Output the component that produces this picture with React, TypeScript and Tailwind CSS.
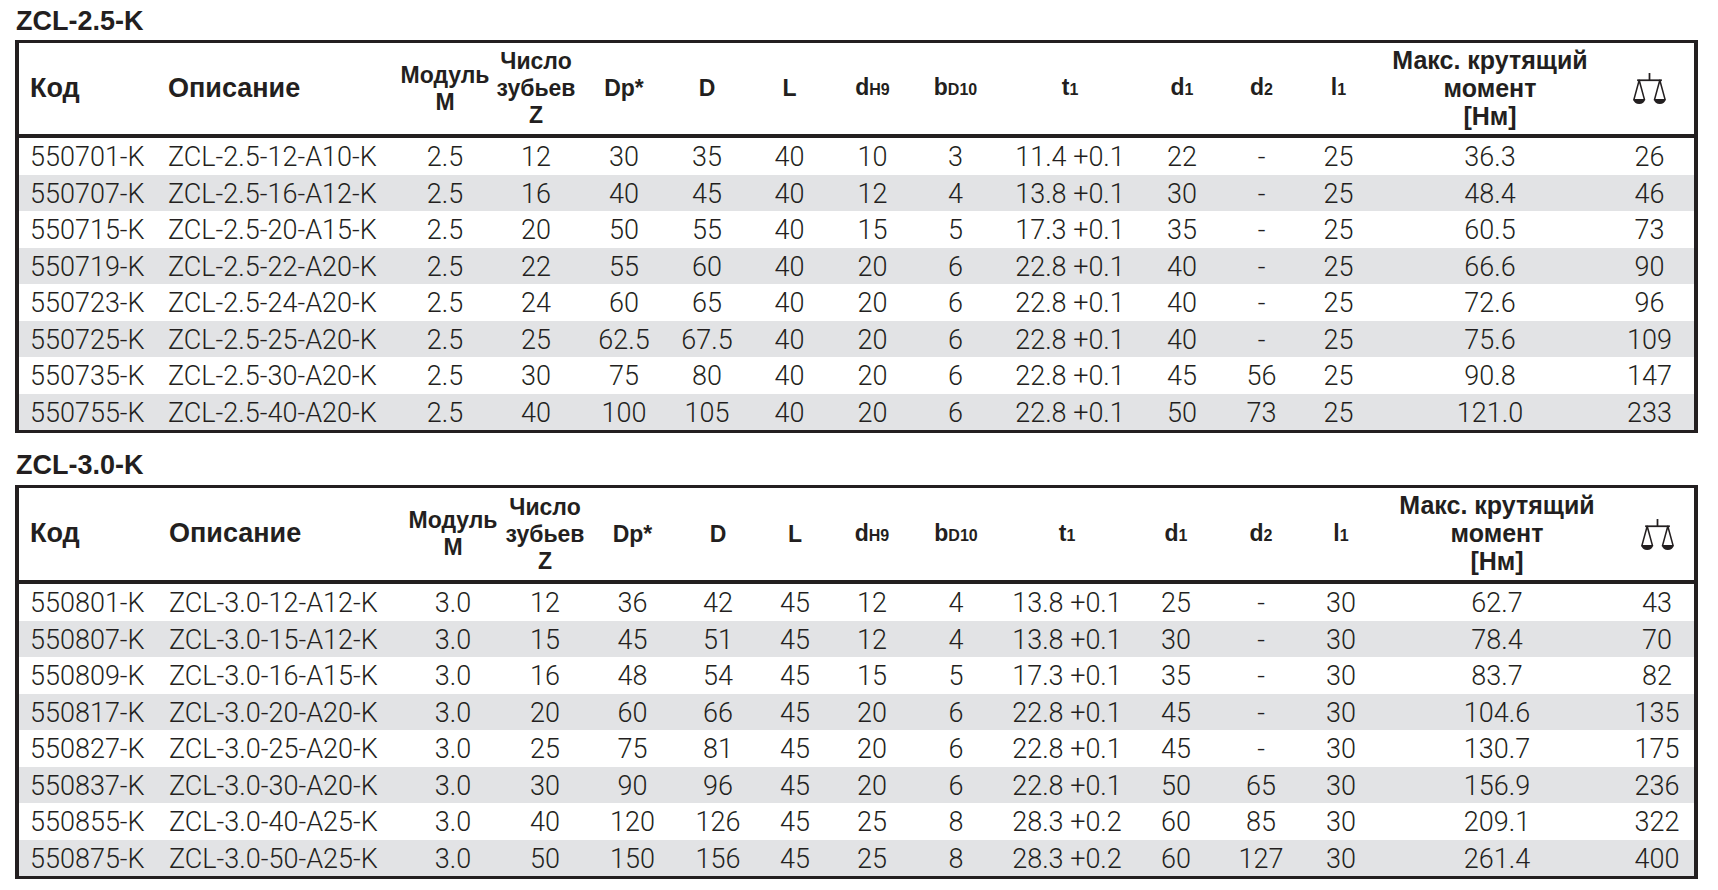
import React, { ReactNode } from "react";

type Row = string[];

type TableDef = {
  title: string;
  cols: string[]; // column widths, one class per column
  rows: Row[];
};

// balance scale icon used in the weight column
function ScaleIcon() {
  return (
    <svg width="33" height="31" viewBox="0 0 32 30" className="inline-block" fill="none">
      <line x1="16" y1="0" x2="16" y2="7" stroke="#231f20" strokeWidth="1.7" />
      <line x1="4" y1="7" x2="28" y2="7" stroke="#231f20" strokeWidth="1.7" />
      <path d="M6 7 L0.8 26 L11.2 26 Z" stroke="#231f20" strokeWidth="1.5" strokeLinejoin="round" />
      <path d="M26 7 L20.8 26 L31.2 26 Z" stroke="#231f20" strokeWidth="1.5" strokeLinejoin="round" />
      <path d="M0.5 26 A5.5 4 0 0 0 11.5 26 Z" fill="#231f20" />
      <path d="M20.5 26 A5.5 4 0 0 0 31.5 26 Z" fill="#231f20" />
    </svg>
  );
}

// bold letter with a smaller trailing part (dH9, bD10, t1 ...)
function Sub({ main, sub }: { main: string; sub: string }) {
  return (
    <span>
      {main}
      <span className="text-[16px]">{sub}</span>
    </span>
  );
}

const headers: ReactNode[] = [
  <span className="text-[27px]">Код</span>,
  <span className="text-[27px]">Описание</span>,
  <>
    Модуль
    <br />M
  </>,
  <>
    Число
    <br />
    зубьев
    <br />Z
  </>,
  "Dp*",
  "D",
  "L",
  <Sub main="d" sub="H9" />,
  <Sub main="b" sub="D10" />,
  <Sub main="t" sub="1" />,
  <Sub main="d" sub="1" />,
  <Sub main="d" sub="2" />,
  <Sub main="l" sub="1" />,
  <span className="text-[25px]">
    Макс. крутящий
    <br />
    момент
    <br />
    [Нм]
  </span>,
  <ScaleIcon />,
];

const tables: TableDef[] = [
  {
    title: "ZCL-2.5-K",
    cols: [
      "w-[136px]", "w-[245px]", "w-[90px]", "w-[92px]", "w-[84px]",
      "w-[82px]", "w-[83px]", "w-[83px]", "w-[83px]", "w-[146px]",
      "w-[78px]", "w-[81px]", "w-[73px]", "w-[230px]", "w-[89px]",
    ],
    rows: [
      ["550701-K", "ZCL-2.5-12-A10-K", "2.5", "12", "30", "35", "40", "10", "3", "11.4 +0.1", "22", "-", "25", "36.3", "26"],
      ["550707-K", "ZCL-2.5-16-A12-K", "2.5", "16", "40", "45", "40", "12", "4", "13.8 +0.1", "30", "-", "25", "48.4", "46"],
      ["550715-K", "ZCL-2.5-20-A15-K", "2.5", "20", "50", "55", "40", "15", "5", "17.3 +0.1", "35", "-", "25", "60.5", "73"],
      ["550719-K", "ZCL-2.5-22-A20-K", "2.5", "22", "55", "60", "40", "20", "6", "22.8 +0.1", "40", "-", "25", "66.6", "90"],
      ["550723-K", "ZCL-2.5-24-A20-K", "2.5", "24", "60", "65", "40", "20", "6", "22.8 +0.1", "40", "-", "25", "72.6", "96"],
      ["550725-K", "ZCL-2.5-25-A20-K", "2.5", "25", "62.5", "67.5", "40", "20", "6", "22.8 +0.1", "40", "-", "25", "75.6", "109"],
      ["550735-K", "ZCL-2.5-30-A20-K", "2.5", "30", "75", "80", "40", "20", "6", "22.8 +0.1", "45", "56", "25", "90.8", "147"],
      ["550755-K", "ZCL-2.5-40-A20-K", "2.5", "40", "100", "105", "40", "20", "6", "22.8 +0.1", "50", "73", "25", "121.0", "233"],
    ],
  },
  {
    title: "ZCL-3.0-K",
    cols: [
      "w-[137px]", "w-[251px]", "w-[92px]", "w-[92px]", "w-[83px]",
      "w-[88px]", "w-[66px]", "w-[88px]", "w-[80px]", "w-[142px]",
      "w-[76px]", "w-[94px]", "w-[66px]", "w-[246px]", "w-[74px]",
    ],
    rows: [
      ["550801-K", "ZCL-3.0-12-A12-K", "3.0", "12", "36", "42", "45", "12", "4", "13.8 +0.1", "25", "-", "30", "62.7", "43"],
      ["550807-K", "ZCL-3.0-15-A12-K", "3.0", "15", "45", "51", "45", "12", "4", "13.8 +0.1", "30", "-", "30", "78.4", "70"],
      ["550809-K", "ZCL-3.0-16-A15-K", "3.0", "16", "48", "54", "45", "15", "5", "17.3 +0.1", "35", "-", "30", "83.7", "82"],
      ["550817-K", "ZCL-3.0-20-A20-K", "3.0", "20", "60", "66", "45", "20", "6", "22.8 +0.1", "45", "-", "30", "104.6", "135"],
      ["550827-K", "ZCL-3.0-25-A20-K", "3.0", "25", "75", "81", "45", "20", "6", "22.8 +0.1", "45", "-", "30", "130.7", "175"],
      ["550837-K", "ZCL-3.0-30-A20-K", "3.0", "30", "90", "96", "45", "20", "6", "22.8 +0.1", "50", "65", "30", "156.9", "236"],
      ["550855-K", "ZCL-3.0-40-A25-K", "3.0", "40", "120", "126", "45", "25", "8", "28.3 +0.2", "60", "85", "30", "209.1", "322"],
      ["550875-K", "ZCL-3.0-50-A25-K", "3.0", "50", "150", "156", "45", "25", "8", "28.3 +0.2", "60", "127", "30", "261.4", "400"],
    ],
  },
];

function ProductTable({ def, first }: { def: TableDef; first: boolean }) {
  return (
    <section className={first ? "" : "mt-[19px]"}>
      <h2
        className={[
          "pl-[16px] h-[27px] leading-[27px] text-[27px] font-bold text-[#231f20] font-['Liberation_Sans',Arial,sans-serif]",
          first ? "mb-[5px]" : "mb-[6px]",
        ].join(" ")}
      >
        {def.title}
      </h2>

      <div className="ml-[15px] w-[1683px] border-x-4 border-y-[3px] border-[#231f20]">
        <table className="w-full table-fixed border-separate border-spacing-0">
          <colgroup>
            {def.cols.map((c, i) => (
              <col key={i} className={c} />
            ))}
          </colgroup>
          <thead>
            <tr>
              {headers.map((h, i) => (
                <th
                  key={i}
                  className={[
                    "p-0 border-b-4 border-[#231f20] font-bold text-[23px] leading-[27px] text-[#231f20] align-middle font-['Liberation_Sans',Arial,sans-serif]",
                    first ? "h-[95px]" : "h-[96px]",
                    i === 0 ? "text-left pl-[11px]" : i === 1 ? "text-left pl-[13px]" : "text-center",
                  ].join(" ")}
                >
                  {h}
                </th>
              ))}
            </tr>
          </thead>
          <tbody>
            {def.rows.map((r, ri) => (
              <tr key={ri} className={ri % 2 === 1 ? "bg-[#e2e3e5]" : "bg-white"}>
                {r.map((v, ci) => (
                  <td
                    key={ci}
                    className={[
                      "h-[36.5px] p-0 pt-[3px] text-[27px] leading-none font-light text-[#231f20] whitespace-nowrap font-['Roboto',sans-serif]",
                      ci === 0 ? "text-left pl-[11px]" : ci === 1 ? "text-left pl-[13px]" : "text-center",
                    ].join(" ")}
                  >
                    {v}
                  </td>
                ))}
              </tr>
            ))}
          </tbody>
        </table>
      </div>
    </section>
  );
}

export default function App() {
  return (
    <div className="w-[1718px] h-[890px] bg-white pt-[8px] overflow-hidden">
      {tables.map((t, i) => (
        <ProductTable key={t.title} def={t} first={i === 0} />
      ))}
    </div>
  );
}
